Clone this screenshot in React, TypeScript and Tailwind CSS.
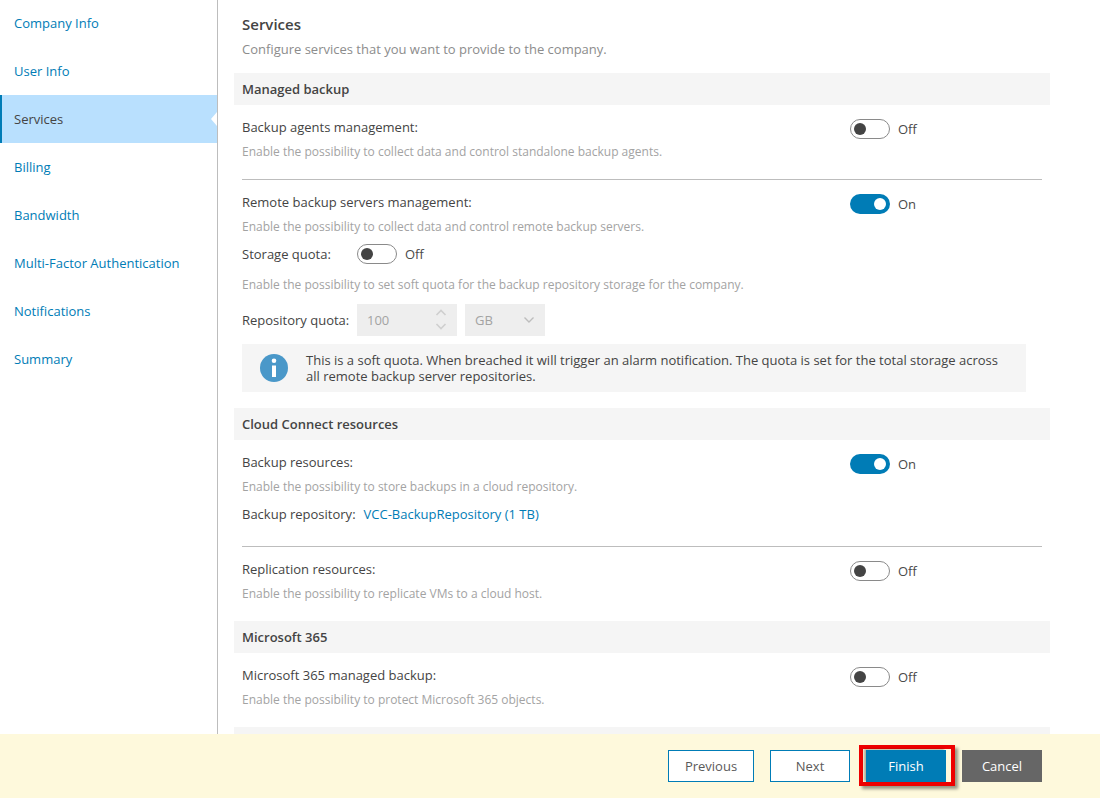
import React from "react";

const navItems = ["Company Info", "User Info", "Services", "Billing", "Bandwidth", "Multi-Factor Authentication", "Notifications", "Summary"];

function Toggle({ on, trackClass = "", textClass = "" }: { on: boolean; trackClass?: string; textClass?: string }) {
  return (
    <span className="flex items-center gap-2">
      <span className={`${on
        ? "flex h-5 w-10 items-center justify-end rounded-[10px] bg-[#007cb6] pr-1"
        : "flex h-5 w-10 items-center justify-start rounded-[10px] border border-[#8a8a8a] bg-white pl-[3px]"} ${trackClass}`}>
        <span className={on ? "h-3 w-3 rounded-full bg-white" : "h-3 w-3 rounded-full bg-[#444444]"} />
      </span>
      <span className={`text-[13px] text-[#4a4a4a] ${textClass}`}>{on ? "On" : "Off"}</span>
    </span>
  );
}

function Section({ title }: { title: string }) {
  return (
    <div className="flex h-8 items-center bg-[#f5f5f5] px-2 pt-[2px] text-[13px] font-semibold text-[#444444]">{title}</div>
  );
}

function Hint({ children, className = "" }: { children: React.ReactNode; className?: string }) {
  return <div className={`text-[12px] leading-[16px] text-[#a3a3a3] ${className}`}>{children}</div>;
}

function ServiceRow({ label, hint, on }: { label: string; hint: string; on: boolean }) {
  return (
    <div className="relative">
      <div className="flex h-5 items-center justify-between text-[13px] text-[#444444]">
        <span>{label}</span>
        <span className="w-[192px]"><Toggle on={on} trackClass="translate-y-px" textClass="translate-y-[2px]" /></span>
      </div>
      <Hint className="mt-[6px]">{hint}</Hint>
    </div>
  );
}

export default function App() {
  return (
    <div className="flex h-[798px] w-[1100px] flex-col overflow-hidden bg-white font-['Open_Sans',sans-serif]">
      <div className="flex h-[734px] shrink-0">
        <nav className="h-full w-[218px] shrink-0 border-r border-[#bdbdbd]">
          <div className="-mt-px">
            {navItems.map((item) => {
              const active = item === "Services";
              return (
                <div key={item} className={active
                  ? "relative flex h-12 items-center border-l-2 border-[#007cb6] bg-[#b9e0fe] pl-3 pt-[2px] text-[13px] text-[#444444]"
                  : "flex h-12 items-center pl-[14px] pt-[2px] text-[13px] text-[#007cb6]"}>
                  {item}
                  {active && (
                    <svg width="6" height="14" viewBox="0 0 6 14" className="absolute right-0 top-[17px]">
                      <polygon points="6,0 0,7 6,14" fill="#ffffff" />
                    </svg>
                  )}
                </div>
              );
            })}
          </div>
        </nav>
        <main className="ml-4 w-[816px] shrink-0">
          <div className="px-2 pt-[14px]">
            <h1 className="text-[15px] font-semibold leading-[20px] text-[#444444]">Services</h1>
            <p className="mt-[5px] h-[34px] text-[13px] leading-[20px] text-[#8c8c8c]">Configure services that you want to provide to the company.</p>
          </div>
          <Section title="Managed backup" />
          <div className="mx-2 h-[75px] border-b border-[#bdbdbd] pt-[13px]">
            <ServiceRow label="Backup agents management:" hint="Enable the possibility to collect data and control standalone backup agents." on={false} />
          </div>
          <div className="mx-2 pt-[13px]">
            <ServiceRow label="Remote backup servers management:" hint="Enable the possibility to collect data and control remote backup servers." on={true} />
            <div className="mt-[10px] flex h-5 items-center gap-[26px] text-[13px] text-[#444444]">
              <span>Storage quota:</span>
              <Toggle on={false} trackClass="-translate-y-px" />
            </div>
            <Hint className="mt-[12px]">Enable the possibility to set soft quota for the backup repository storage for the company.</Hint>
            <div className="mt-[11px] flex h-8 items-center text-[13px] text-[#444444]">
              <span className="w-[115px] pt-[2px]">Repository quota:</span>
              <div className="flex h-8 w-[100px] items-center justify-between bg-[#eeeeee] px-[10px] text-[#a3a3a3]">
                <span className="pt-[2px]">100</span>
                <svg width="12" height="26" viewBox="0 0 12 26" fill="none" stroke="#cfcfcf" strokeWidth="1.6">
                  <path d="M1.5 8 L6 3.5 L10.5 8" />
                  <path d="M1.5 17 L6 21.5 L10.5 17" />
                </svg>
              </div>
              <div className="ml-2 flex h-8 w-20 items-center justify-between bg-[#eeeeee] px-[10px] text-[#a3a3a3]">
                <span className="pt-[2px]">GB</span>
                <svg width="12" height="8" viewBox="0 0 12 8" fill="none" stroke="#bdbdbd" strokeWidth="1.4">
                  <path d="M1.5 1.5 L6 6 L10.5 1.5" />
                </svg>
              </div>
            </div>
            <div className="mt-2 flex h-12 w-[784px] items-center bg-[#f5f5f5] pl-[18px] pr-6 text-[13px] leading-[16px] text-[#444444]">
              <svg width="28" height="28" viewBox="0 0 28 28" className="mr-[18px] shrink-0">
                <circle cx="14" cy="14" r="14" fill="#4a98c9" />
                <circle cx="14" cy="6.8" r="2.3" fill="#ffffff" />
                <rect x="12" y="11.5" width="4" height="11.5" fill="#ffffff" />
              </svg>
              <span>This is a soft quota. When breached it will trigger an alarm notification. The quota is set for the total storage across all remote backup server repositories.</span>
            </div>
          </div>
          <div className="mt-4"><Section title="Cloud Connect resources" /></div>
          <div className="mx-2 h-[107px] border-b border-[#bdbdbd] pt-[13px]">
            <ServiceRow label="Backup resources:" hint="Enable the possibility to store backups in a cloud repository." on={true} />
            <div className="mt-[10px] flex h-5 items-center gap-2 text-[13px] text-[#444444]">
              <span>Backup repository:</span>
              <span className="text-[#007cb6]">VCC-BackupRepository (1 TB)</span>
            </div>
          </div>
          <div className="mx-2 h-[74px] pt-[13px]">
            <ServiceRow label="Replication resources:" hint="Enable the possibility to replicate VMs to a cloud host." on={false} />
          </div>
          <Section title="Microsoft 365" />
          <div className="mx-2 h-[74px] pt-[13px]">
            <ServiceRow label="Microsoft 365 managed backup:" hint="Enable the possibility to protect Microsoft 365 objects." on={false} />
          </div>
          <Section title="" />
        </main>
      </div>
      <footer className="flex h-[64px] shrink-0 items-start bg-[#fef9dc] pl-[668px] pt-4 text-[13px]">
        <button className="h-8 w-[86px] border border-[#007cb6] bg-white pt-px text-[#5a5a5a]">Previous</button>
        <button className="ml-4 h-8 w-20 border border-[#007cb6] bg-white pt-px text-[#5a5a5a]">Next</button>
        <div className="relative ml-4 h-8 w-20">
          <span className="absolute -bottom-[4px] -left-[7px] -right-[9px] -top-[5px] border-4 border-[#ee0000] shadow-[3px_3px_3px_rgba(0,0,0,0.4)]" />
          <button className="relative h-8 w-20 bg-[#007cb6] pt-px text-white shadow-[-2px_-1px_2px_rgba(0,0,0,0.3)]">Finish</button>
        </div>
        <button className="ml-4 h-8 w-20 bg-[#666666] pt-px text-white">Cancel</button>
      </footer>
    </div>
  );
}
